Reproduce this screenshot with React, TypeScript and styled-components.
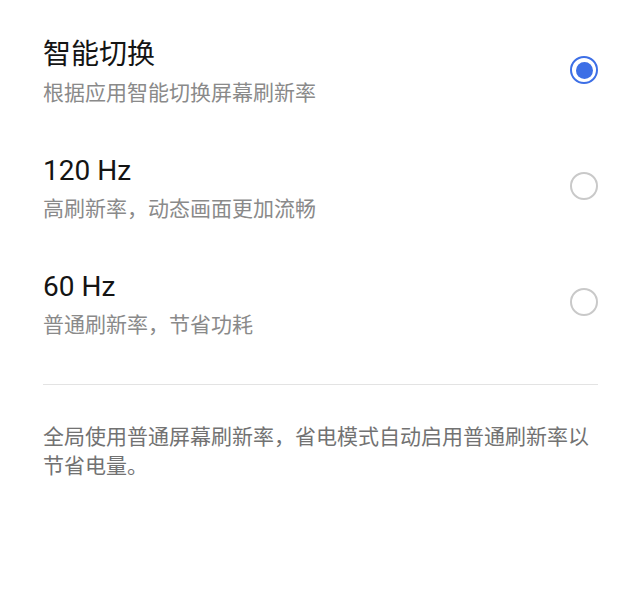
import styled, { createGlobalStyle } from "styled-components";

const GlobalStyle = createGlobalStyle`
    body {
        margin: 0;
        background: #fff;
        font-family: Roboto, "Noto Sans CJK SC", sans-serif;
    }
`;

const Page = styled.main`
    display: flex;
    flex-direction: column;
    padding: 14px 42px 0 43px;
`;

const Option = styled.label`
    display: flex;
    align-items: center;
    justify-content: space-between;
    height: 116px;
    cursor: pointer;
`;

const Texts = styled.div`
    display: flex;
    flex-direction: column;
`;

const Title = styled.span`
    font-size: 28px;
    line-height: 38px;
    color: #141414;
`;

const Subtitle = styled.span`
    margin-top: 4px;
    font-size: 21px;
    line-height: 30px;
    color: #8a8a8a;
`;

const Radio = styled.span<{ $checked: boolean }>`
    box-sizing: border-box;
    flex: none;
    display: flex;
    align-items: center;
    justify-content: center;
    width: 28px;
    height: 28px;
    margin-top: -4px;
    border-radius: 50%;
    border: 2.5px solid ${(p) => (p.$checked ? "#3d6fe6" : "#c9c9c9")};
    &::after {
        content: "";
        width: 17px;
        height: 17px;
        border-radius: 50%;
        background: #3d6fe6;
        display: ${(p) => (p.$checked ? "block" : "none")};
    }
`;

const Divider = styled.hr`
    margin: 22px 0 0 0;
    border: none;
    height: 1px;
    background: #e3e3e3;
`;

const Note = styled.p`
    margin: 38px 0 0 0;
    font-size: 21px;
    line-height: 29px;
    color: #727272;
`;

const options = [
    { title: "智能切换", desc: "根据应用智能切换屏幕刷新率" },
    { title: "120 Hz", desc: "高刷新率，动态画面更加流畅" },
    { title: "60 Hz", desc: "普通刷新率，节省功耗" },
];

const App = () => {
    const selected = 0;
    return (
        <>
            <GlobalStyle />
            <Page>
                {options.map((o, i) => (
                    <Option key={o.title}>
                        <Texts>
                            <Title>{o.title}</Title>
                            <Subtitle>{o.desc}</Subtitle>
                        </Texts>
                        <Radio $checked={i === selected} />
                    </Option>
                ))}
                <Divider />
                <Note>全局使用普通屏幕刷新率，省电模式自动启用普通刷新率以节省电量。</Note>
            </Page>
        </>
    );
};

export default App;
